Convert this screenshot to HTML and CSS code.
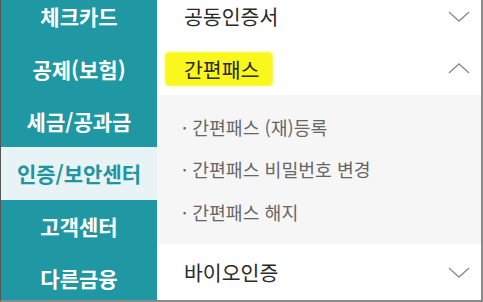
FILE: index.html
```html
<!DOCTYPE html>
<html lang="ko">
<head>
<meta charset="utf-8">
<link rel="stylesheet" href="styles.css">
</head>
<body>
<div class="frame">
  <nav class="side">
    <div class="side-list">
      <div class="side-item">체크카드</div>
      <div class="side-item">공제(보험)</div>
      <div class="side-item">세금/공과금</div>
      <div class="side-item active">인증/보안센터</div>
      <div class="side-item">고객센터</div>
      <div class="side-item">다른금융</div>
    </div>
  </nav>
  <main class="panel">
    <div class="panel-list">
      <div class="row">
        <span class="row-label">공동인증서</span>
        <svg class="chev" viewBox="0 0 24 12"><polyline points="1,1 12,11 23,1"/></svg>
      </div>
      <div class="row row-open">
        <span class="row-label"><span class="mark">간편패스</span></span>
        <svg class="chev" viewBox="0 0 24 12"><polyline points="1,11 12,1 23,11"/></svg>
      </div>
      <div class="sub">
        <div class="sub-item">· 간편패스 (재)등록</div>
        <div class="sub-item">· 간편패스 비밀번호 변경</div>
        <div class="sub-item">· 간편패스 해지</div>
      </div>
      <div class="row row-last">
        <span class="row-label">바이오인증</span>
        <svg class="chev" viewBox="0 0 24 12"><polyline points="1,1 12,11 23,1"/></svg>
      </div>
    </div>
  </main>
</div>
</body>
</html>
```
FILE: styles.css
```css
* { box-sizing: border-box; }
html, body { margin: 0; padding: 0; }
body {
  width: 483px;
  height: 302px;
  overflow: hidden;
  background: #ffffff;
  font-family: "Noto Sans CJK KR", "Noto Sans", sans-serif;
}
.frame {
  width: 483px;
  height: 302px;
  display: flex;
  border-left: 1px solid #555;
  border-right: 2px solid #8a8a8a;
  border-bottom: 2px solid #8a8a8a;
  overflow: hidden;
}
.side {
  width: 156px;
  flex: none;
  background: #2098a3;
  overflow: hidden;
}
.side-list {
  margin-top: -10px;
  display: flex;
  flex-direction: column;
}
.side-item {
  height: 52.4px;
  display: flex;
  align-items: center;
  justify-content: center;
  color: #ffffff;
  font-size: 21px;
  font-weight: 700;
}
.side-item.active {
  background: #e7f3f5;
  color: #1f95a1;
}
.panel {
  flex: 1;
  overflow: hidden;
}
.panel-list {
  margin-top: -10px;
  display: flex;
  flex-direction: column;
}
.row {
  height: 52px;
  display: flex;
  align-items: center;
  justify-content: space-between;
  padding: 0 11px 0 27px;
  color: #2a2a2a;
  font-size: 20.5px;
}
.row-open { height: 53px; }
.row-last { height: 56px; }
.mark {
  background: #f9f71c;
  border-radius: 3px;
  padding: 1px 13px 1px 18px;
  margin-left: -18px;
  box-shadow: 0 0 2px 1px #f9f71c;
}
.chev {
  width: 22px;
  height: 11px;
  fill: none;
  stroke: #8c8c8c;
  stroke-width: 1.4;
}
.sub {
  background: #f6f6f6;
  height: 149px;
  padding: 11px 0 11px 25px;
  display: flex;
  flex-direction: column;
}
.sub-item {
  height: 42.5px;
  display: flex;
  align-items: center;
  color: #666666;
  font-size: 18.3px;
}
```
